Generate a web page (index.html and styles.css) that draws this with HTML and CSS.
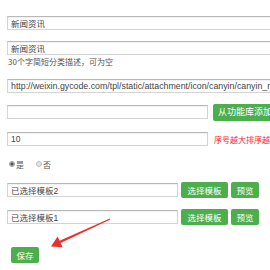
FILE: index.html
```html
<!DOCTYPE html>
<html>
<head>
<meta charset="utf-8">
<link rel="stylesheet" href="styles.css">
</head>
<body>
<div class="form">
  <div class="row r1"><input class="inp full" value="新闻资讯" readonly></div>
  <div class="row r2"><input class="inp full" value="新闻资讯" readonly></div>
  <div class="hint">30个字简短分类描述，可为空</div>
  <div class="row r3"><input class="inp full url" value="http://weixin.gycode.com/tpl/static/attachment/icon/canyin/canyin_nav_news.png" readonly></div>
  <div class="row r4"><input class="inp mid" value="" readonly><button class="btn lib">从功能库添加</button></div>
  <div class="row r5"><input class="inp mid" value="10" readonly><span class="warn">序号越大排序越靠前</span></div>
  <div class="radios">
    <label class="rl"><span class="radio on"></span>是</label>
    <label class="rl"><span class="radio"></span>否</label>
  </div>
  <div class="row r6"><input class="inp short" value="已选择模板2" readonly><button class="btn sel">选择模板</button><button class="btn pre">预览</button></div>
  <div class="row r7"><input class="inp short" value="已选择模板1" readonly><button class="btn sel">选择模板</button><button class="btn pre">预览</button></div>
  <div class="save-row"><button class="btn save">保存</button></div>
</div>
<svg class="arrow" width="270" height="270" viewBox="0 0 270 270">
  <polygon points="109.8,218.6 59.6,240.7 57.6,236.6 51,246.5 62.6,247.2 60.6,243.0 110.3,219.6" fill="#e9302c"/>
</svg>
</body>
</html>
```
FILE: styles.css
```css
html, body {
  margin: 0;
  padding: 0;
  background: #fff;
  width: 270px;
  height: 270px;
  overflow: hidden;
}
body {
  position: relative;
  font-family: "Liberation Sans", "Noto Sans CJK SC", sans-serif;
  font-size: 8px;
  color: #444;
}
.form {
  padding: 16px 0 0 7px;
  display: flex;
  flex-direction: column;
}
.row {
  display: flex;
  align-items: center;
  height: 14px;
}
.inp {
  box-sizing: border-box;
  height: 14px;
  margin: 0;
  padding: 0 3px;
  border: 1px solid #d4d4d4;
  border-top-color: #b8b8b8;
  box-shadow: inset 0 1px 1px rgba(0,0,0,0.06);
  background: #fff;
  font-family: "Liberation Sans", "Noto Sans CJK SC", sans-serif;
  font-size: 8.5px;
  color: #444;
  outline: none;
  flex: none;
}
.url { font-size: 8.8px; }
.full { width: 300px; }
.mid { width: 201px; }
.short { width: 171px; }
.r2 { margin-top: 11px; }
.hint {
  margin-top: 2px;
  height: 10px;
  line-height: 10px;
  color: #555;
  font-family: "Noto Sans CJK SC", sans-serif;
  padding-left: 1px;
}
.r3 { margin-top: 12px; }
.r4 { margin-top: 12px; }
.r5 { margin-top: 13px; }
.btn {
  box-sizing: border-box;
  border: none;
  margin: 0;
  padding: 0;
  background: #4cae4c;
  color: #fff;
  font-family: "Noto Sans CJK SC", sans-serif;
  font-size: 8.5px;
  border-radius: 2px;
  flex: none;
  line-height: 16px;
}
.lib {
  margin-left: 5px;
  height: 17px;
  width: 70px;
  text-align: left;
  padding-left: 5px;
  font-size: 9px;
}
.warn {
  margin-left: 6px;
  color: #f22;
  font-family: "Noto Sans CJK SC", sans-serif;
  white-space: nowrap;
}
.radios {
  margin-top: 12px;
  height: 12px;
  display: flex;
  align-items: center;
  gap: 12px;
  padding-left: 2px;
}
.rl {
  display: flex;
  align-items: flex-end;
  color: #555;
  font-family: "Noto Sans CJK SC", sans-serif;
  font-size: 8px;
}
.radio {
  box-sizing: border-box;
  width: 6px;
  height: 6px;
  border-radius: 50%;
  border: 1px solid #bbb;
  background: #e6e6e6;
  margin-right: 1px;
  margin-bottom: 3px;
}
.radio.on {
  background: radial-gradient(circle, #555 0 1.4px, #ddd 1.8px);
  border-color: #999;
}
.r6 { margin-top: 13px; }
.r7 { margin-top: 13px; }
.sel {
  margin-left: 3px;
  width: 47px;
  height: 16px;
}
.pre {
  margin-left: 3px;
  width: 28px;
  height: 16px;
}
.save-row {
  margin-top: 23px;
  padding-left: 4px;
}
.save {
  width: 28px;
  height: 16px;
}
.arrow {
  position: absolute;
  left: 0;
  top: 0;
  pointer-events: none;
}
```
